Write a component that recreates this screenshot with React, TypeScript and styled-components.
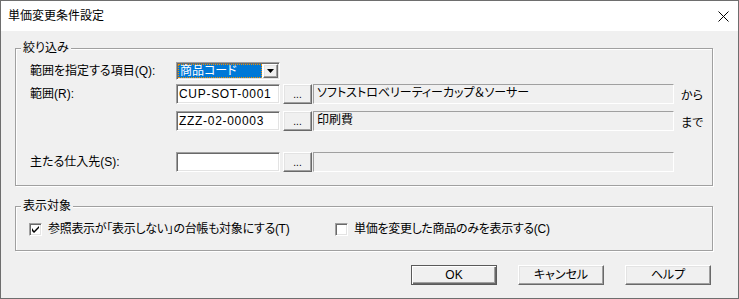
import React from 'react';
import styled, { createGlobalStyle } from 'styled-components';

const GlobalStyle = createGlobalStyle`
	html, body {
		margin: 0;
		padding: 0;
		background: #ffffff;
	}
	body {
		font-family: "Liberation Sans", "Noto Sans CJK JP", sans-serif;
		font-size: 12px;
		color: #000000;
	}
	* {
		box-sizing: border-box;
	}
`;

const Window = styled.div`
	width: 739px;
	height: 299px;
	border: 1px solid #6e6e6e;
	background: #f0f0f0;
	display: flex;
	flex-direction: column;
	font-feature-settings: 'palt';
`;

const TitleBar = styled.div`
	height: 30px;
	flex: none;
	background: #ffffff;
	display: flex;
	align-items: center;
	justify-content: space-between;
	padding: 0 9px 0 7px;
`;

const TitleText = styled.span`
	font-size: 12px;
	line-height: 14px;
`;

const Body = styled.div`
	flex: 1;
	display: flex;
	flex-direction: column;
	padding: 10px 25px 0 14px;
`;

const Group = styled.fieldset<{ $top?: number }>`
	margin: ${p => p.$top ?? 0}px 0 0 0;
	padding: 0;
	min-width: 0;
	border: 1px solid #a0a0a0;
	box-shadow: inset 1px 1px 0 #ffffff, 1px 1px 0 #ffffff;
`;

const Legend = styled.legend`
	margin-left: 5px;
	padding: 0 2px;
	height: 15px;
	line-height: 15px;
	background: #f0f0f0;
`;

const Rows = styled.div<{ $pt: number; $pb: number; $pl: number }>`
	display: flex;
	flex-direction: column;
	padding: ${p => p.$pt}px 0 ${p => p.$pb}px ${p => p.$pl}px;
`;

const Row = styled.div<{ $top?: number; $h?: number }>`
	display: flex;
	align-items: center;
	height: ${p => p.$h ?? 20}px;
	margin-top: ${p => p.$top ?? 0}px;
`;

const Label = styled.span`
	width: 146px;
	flex: none;
	line-height: 14px;
`;

const sunken = `
	border-style: solid;
	border-width: 1px;
	border-color: #a0a0a0 #ffffff #ffffff #a0a0a0;
	box-shadow: inset 1px 1px 0 #696969, inset -1px -1px 0 #e3e3e3;
`;

const raised = `
	border-style: solid;
	border-width: 1px;
	border-color: #ffffff #696969 #696969 #ffffff;
	box-shadow: inset -1px -1px 0 #a0a0a0, inset 1px 1px 0 #e3e3e3;
`;

const TextBox = styled.div`
	${sunken}
	width: 104px;
	height: 20px;
	flex: none;
	background: #ffffff;
	padding: 0 2px;
	line-height: 18px;
	letter-spacing: 0.7px;
	white-space: nowrap;
	overflow: hidden;
`;

const DotButton = styled.div`
	${raised}
	width: 29px;
	height: 20px;
	flex: none;
	margin-left: 3px;
	background: #f0f0f0;
	display: flex;
	align-items: flex-end;
	justify-content: center;
	padding-bottom: 3px;
	font-size: 10px;
	line-height: 10px;
`;

const ReadOnly = styled.div`
	width: 361px;
	height: 20px;
	flex: none;
	margin-left: 1px;
	background: #f0f0f0;
	border-style: solid;
	border-width: 1px;
	border-color: #a0a0a0 #ffffff #ffffff #a0a0a0;
	padding: 0 3px;
	line-height: 16px;
	white-space: nowrap;
	overflow: hidden;
`;

const Suffix = styled.span`
	margin-left: 7px;
	margin-top: 4px;
	line-height: 14px;
`;

const Combo = styled.div`
	${sunken}
	width: 104px;
	height: 18px;
	flex: none;
	background: #ffffff;
	display: flex;
	gap: 1px;
	padding: 1px;
`;

const Selected = styled.div`
	flex: 1;
	background: #0078d7;
	color: #ffffff;
	border: 1px dotted #f09000;
	padding-left: 1px;
	line-height: 12px;
	white-space: nowrap;
`;

const DropButton = styled.div`
	${raised}
	width: 15px;
	flex: none;
	background: #f0f0f0;
	display: flex;
	align-items: center;
	justify-content: center;
`;

const CheckRow = styled.div`
	display: flex;
	align-items: center;
	height: 14px;
`;

const CheckItem = styled.label<{ $w?: number }>`
	display: flex;
	align-items: center;
	gap: 6px;
	flex: none;
	min-width: 0;
	width: ${p => (p.$w ? `${p.$w}px` : 'auto')};
	line-height: 14px;
	white-space: nowrap;
`;

const CheckText = styled.span`
	letter-spacing: -0.3px;
`;

const Box = styled.span`
	${sunken}
	width: 13px;
	height: 13px;
	flex: none;
	background: #ffffff;
	display: flex;
	align-items: center;
	justify-content: center;
`;

const Footer = styled.div`
	display: flex;
	justify-content: flex-end;
	gap: 21px;
	margin-top: 14px;
	padding-right: 2px;
`;

const PushButton = styled.div<{ $default?: boolean }>`
	width: 86px;
	height: 20px;
	background: #f0f0f0;
	display: flex;
	align-items: center;
	justify-content: center;
	line-height: 14px;
	${p =>
		p.$default
			? `
		border: 1px solid #5a5a5a;
		box-shadow: inset 1px 1px 0 #ffffff, inset -1px -1px 0 #696969, inset -2px -2px 0 #a0a0a0;
	`
			: raised}
`;

const Check = ({ checked, text, width }: { checked: boolean; text: string; width?: number }) => (
	<CheckItem $w={width}>
		<Box>
			{checked && (
				<svg width="7" height="7" viewBox="0 0 7 7">
					<path d="M0 2 L0 5 L2 7 L7 2 L7 0 L2 5 Z" fill="#000" />
				</svg>
			)}
		</Box>
		<CheckText>{text}</CheckText>
	</CheckItem>
);

const App = () => {
	return (
		<>
			<GlobalStyle />
			<Window>
				<TitleBar>
					<TitleText>単価変更条件設定</TitleText>
					<svg width="11" height="11" viewBox="0 0 11 11">
						<path d="M0.5 0.5 L10.5 10.5 M10.5 0.5 L0.5 10.5" stroke="#000" strokeWidth="1" />
					</svg>
				</TitleBar>
				<Body>
					<Group>
						<Legend>絞り込み</Legend>
						<Rows $pt={6} $pb={13} $pl={14}>
							<Row $h={18}>
								<Label>範囲を指定する項目(Q):</Label>
								<Combo>
									<Selected>商品コード</Selected>
									<DropButton>
										<svg width="7" height="4" viewBox="0 0 7 4">
											<path d="M0 0 H7 L3.5 4 Z" fill="#000" />
										</svg>
									</DropButton>
								</Combo>
							</Row>
							<Row $top={4}>
								<Label>範囲(R):</Label>
								<TextBox>CUP-SOT-0001</TextBox>
								<DotButton>...</DotButton>
								<ReadOnly>ソフトストロベリーティーカップ＆ソーサー</ReadOnly>
								<Suffix>から</Suffix>
							</Row>
							<Row $top={7}>
								<Label />
								<TextBox>ZZZ-02-00003</TextBox>
								<DotButton>...</DotButton>
								<ReadOnly>印刷費</ReadOnly>
								<Suffix>まで</Suffix>
							</Row>
							<Row $top={21}>
								<Label>主たる仕入先(S):</Label>
								<TextBox />
								<DotButton>...</DotButton>
								<ReadOnly />
							</Row>
						</Rows>
					</Group>
					<Group $top={13}>
						<Legend>表示対象</Legend>
						<Rows $pt={8} $pb={14} $pl={13}>
							<CheckRow>
								<Check checked width={306} text="参照表示が「表示しない」の台帳も対象にする(T)" />
								<Check checked={false} text="単価を変更した商品のみを表示する(C)" />
							</CheckRow>
						</Rows>
					</Group>
					<Footer>
						<PushButton $default>OK</PushButton>
						<PushButton>キャンセル</PushButton>
						<PushButton>ヘルプ</PushButton>
					</Footer>
				</Body>
			</Window>
		</>
	);
};

export default App;
